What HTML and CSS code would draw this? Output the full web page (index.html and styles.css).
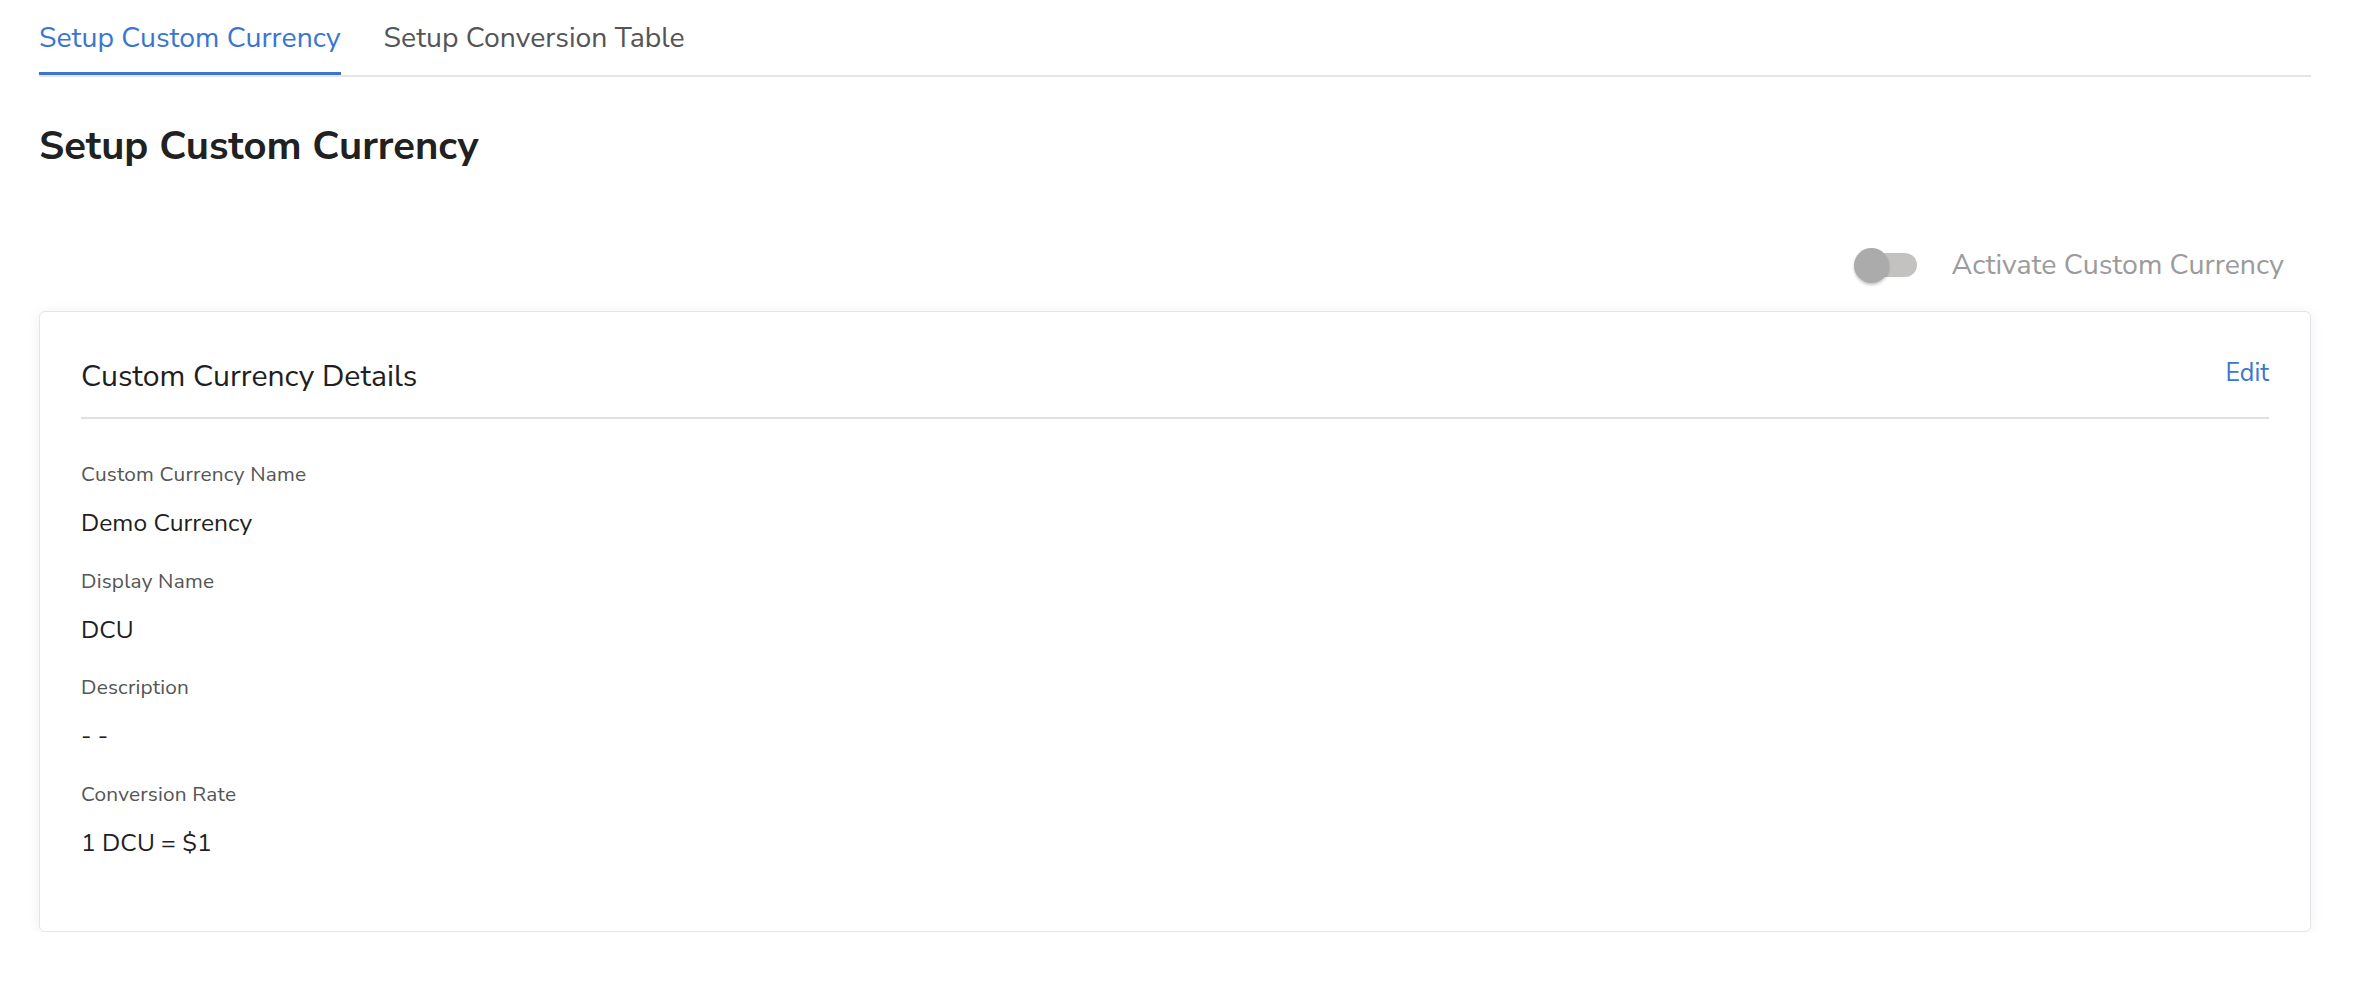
FILE: index.html
```html
<!DOCTYPE html>
<html>
<head>
<meta charset="utf-8">
<link rel="stylesheet" href="styles.css">
</head>
<body>
<div class="page">
  <nav class="tabs">
    <div class="tab active">Setup Custom Currency</div>
    <div class="tab">Setup Conversion Table</div>
  </nav>
  <h1 class="title">Setup Custom Currency</h1>
  <div class="toggle-row">
    <span class="switch"><span class="track"></span><span class="knob"></span></span>
    <span class="toggle-label">Activate Custom Currency</span>
  </div>
  <section class="card">
    <header class="card-head">
      <h2 class="card-title">Custom Currency Details</h2>
      <a class="edit">Edit</a>
    </header>
    <dl class="fields">
      <dt>Custom Currency Name</dt>
      <dd>Demo Currency</dd>
      <dt>Display Name</dt>
      <dd>DCU</dd>
      <dt>Description</dt>
      <dd>- -</dd>
      <dt>Conversion Rate</dt>
      <dd>1 DCU = $1</dd>
    </dl>
  </section>
</div>
</body>
</html>
```

FILE: styles.css
```css
html, body {
  margin: 0;
  padding: 0;
  background: #ffffff;
}
body {
  font-family: "Nunito Sans", Lato, "Open Sans", sans-serif;
  color: #222;
}
.page {
  padding: 0 51px 0 39px;
}
.tabs {
  display: flex;
  gap: 43px;
  border-bottom: 2px solid #e5e5e5;
}
.tab {
  font-size: 28.4px;
  line-height: 36px;
  padding: 20px 0 16px;
  color: #555;
  border-bottom: 3px solid transparent;
}
.tab.active {
  color: #3a76d0;
  border-bottom-color: #3a76d0;
}
.title {
  font-size: 40px;
  font-weight: 700;
  line-height: 48px;
  margin: 45px 0 0;
  color: #212121;
}
.toggle-row {
  display: flex;
  justify-content: flex-end;
  align-items: center;
  gap: 35px;
  margin-top: 76px;
  padding-right: 27px;
  height: 38px;
}
.switch {
  position: relative;
  width: 63px;
  height: 35px;
  display: inline-block;
}
.track {
  position: absolute;
  left: 5px;
  right: 0;
  top: 5.5px;
  height: 24px;
  border-radius: 12px;
  background: #c3c2c1;
}
.knob {
  position: absolute;
  left: 0;
  top: 0;
  width: 35px;
  height: 35px;
  border-radius: 50%;
  background: #ababab;
  box-shadow: 0 2px 3px rgba(0,0,0,0.22);
}
.toggle-label {
  font-size: 28.5px;
  color: #9b9b9b;
  line-height: 38px;
}
.card {
  margin-top: 27px;
  border: 1px solid #e2e5e9;
  border-radius: 6px;
  background: #fff;
  box-shadow: 0 2px 14px rgba(0,0,0,0.07);
  padding: 0 41px 72px;
}
.card-head {
  display: flex;
  justify-content: space-between;
  align-items: flex-start;
  padding: 44px 0 21px;
  border-bottom: 2px solid #e0e0e0;
}
.card-title {
  margin: 0;
  font-size: 30.2px;
  font-weight: 400;
  line-height: 40px;
  color: #1f1f1f;
}
.edit {
  font-size: 25px;
  color: #3a76d0;
  line-height: 34px;
}
.fields {
  margin: 41px 0 0;
}
.fields dt {
  font-size: 20.8px;
  line-height: 28px;
  color: #555;
  letter-spacing: 0.2px;
}
.fields dd {
  margin: 19px 0 27.5px;
  font-size: 24.6px;
  line-height: 32px;
  color: #1f1f1f;
}
.fields dd:last-child {
  margin-bottom: 0;
}
```
